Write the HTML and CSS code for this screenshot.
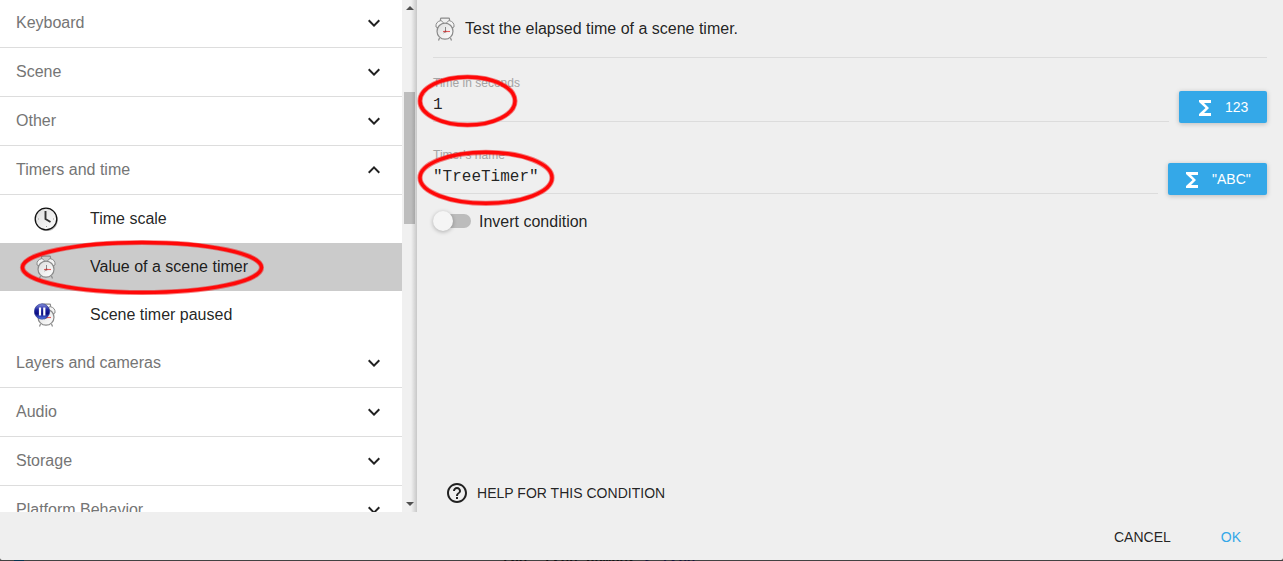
FILE: index.html
```
<!DOCTYPE html>
<html lang="en">
<head>
<meta charset="utf-8">
<title>Condition editor</title>
<link rel="stylesheet" href="styles.css">
</head>
<body>
<svg class="defs" width="0" height="0">
  <defs>
    <linearGradient id="face" x1="0" y1="0" x2="1" y2="1"><stop offset="0" stop-color="#dcdcdc"/><stop offset="1" stop-color="#fff"/></linearGradient>
    <linearGradient id="blue" x1="0" y1="0" x2="0" y2="1"><stop offset="0" stop-color="#8c96e0"/><stop offset=".4" stop-color="#1a209c"/><stop offset=".65" stop-color="#0b0b80"/><stop offset="1" stop-color="#5a80f0"/></linearGradient>
    <symbol id="down" viewBox="0 0 24 24"><path d="M7.41 8.59 12 13.17l4.59-4.58L18 10l-6 6-6-6z"/></symbol>
    <symbol id="up" viewBox="0 0 24 24"><path d="M7.41 15.41 12 10.83l4.59 4.58L18 14l-6-6-6 6z"/></symbol>
    <symbol id="sigma" viewBox="0 0 24 24"><path d="M18 4H6v2l6.500 6L6 18v2h12v-3h-7l5-5-5-5h7z"/></symbol>
    <symbol id="alarm" viewBox="0 0 24 24">
      <path d="M7.500 3.800V2q0-.8 1-.8h7q1 0 1 .8v1.800M6.500 21l-1 2.500M17.500 21l1 2.500" fill="none" stroke="#8a8a8a" stroke-width="1.200"/>
      <path d="M3 10Q2.300 4.800 8 3.500l2.500 2.300-5.500 5zM21 10Q21.700 4.800 16 3.500l-2.500 2.300 5.500 5z" fill="#f4f4f4" stroke="#8a8a8a"/>
      <circle cx="12" cy="14.200" r="8" fill="url(#face)" stroke="#8a8a8a" stroke-width="1.200"/>
      <path d="M12.500 10v4.500l-2 1.500" stroke="#888" fill="none"/>
      <path d="M10 14.500h7" stroke="#e65c5c" stroke-width="1.100" fill="none"/><circle cx="12.500" cy="14.500" r="1" fill="#a84040"/>
    </symbol>
  </defs>
</svg>
<div class="dialog">
  <div class="main">
    <div class="list">
      <div class="group"><span>Keyboard</span><svg class="chev"><use href="#down"/></svg></div>
      <div class="group"><span>Scene</span><svg class="chev"><use href="#down"/></svg></div>
      <div class="group"><span>Other</span><svg class="chev"><use href="#down"/></svg></div>
      <div class="group"><span>Timers and time</span><svg class="chev"><use href="#up"/></svg></div>
      <div class="item">
        <svg class="pic" viewBox="0 0 24 24"><circle cx="12.800" cy="13.200" r="11" fill="#bbb"/><circle cx="12" cy="12" r="10.800" fill="url(#face)" stroke="#111" stroke-width="1.300"/><path d="M11.500 4v8l5 3" fill="none" stroke="#333" stroke-width="1.900"/><path d="M4 12h1M19 12h1M12 19.500h1" stroke="#999"/></svg>
        <span>Time scale</span>
      </div>
      <div class="item selected"><svg class="pic"><use href="#alarm"/></svg><span>Value of a scene timer</span></div>
      <div class="item">
        <svg class="pic" viewBox="0 0 24 24"><use href="#alarm" width="24" height="24"/><circle cx="8" cy="8.500" r="7.700" fill="url(#blue)" stroke="#22308c" stroke-width=".6"/><path d="M6 4.500v8M10.300 4.500v8" stroke="#fff" stroke-width="2.200"/></svg>
        <span>Scene timer paused</span>
      </div>
      <div class="group"><span>Layers and cameras</span><svg class="chev"><use href="#down"/></svg></div>
      <div class="group"><span>Audio</span><svg class="chev"><use href="#down"/></svg></div>
      <div class="group"><span>Storage</span><svg class="chev"><use href="#down"/></svg></div>
      <div class="group"><span>Platform Behavior</span><svg class="chev"><use href="#down"/></svg></div>
    </div>
    <div class="scrollbar">
      <svg class="arrow" viewBox="0 0 8 4"><path d="M0 4 4 0l4 4z"/></svg>
      <div class="thumb"></div>
      <svg class="arrow" viewBox="0 0 8 4"><path d="M0 0h8L4 4z"/></svg>
    </div>
    <div class="detail">
      <div class="heading"><svg class="pic"><use href="#alarm"/></svg><span>Test the elapsed time of a scene timer.</span></div>
      <div class="row first">
        <div class="field"><label>Time in seconds</label><div class="value">1</div></div>
        <button class="expr num"><svg><use href="#sigma"/></svg><span>123</span></button>
      </div>
      <div class="row">
        <div class="field"><label>Timer's name</label><div class="value">"TreeTimer"</div></div>
        <button class="expr str"><svg><use href="#sigma"/></svg><span>"ABC"</span></button>
      </div>
      <div class="toggle"><div class="switch"><div class="knob"></div></div><span>Invert condition</span></div>
      <div class="help"><svg viewBox="0 0 24 24"><path d="M11 18h2v-2h-2v2zm1-16C6.480 2 2 6.480 2 12s4.480 10 10 10 10-4.480 10-10S17.520 2 12 2zm0 18c-4.410 0-8-3.590-8-8s3.590-8 8-8 8 3.590 8 8-3.590 8-8 8zm0-14c-2.210 0-4 1.790-4 4h2c0-1.100.9-2 2-2s2 .9 2 2c0 2-3 1.750-3 5h2c0-2.250 3-2.500 3-5 0-2.210-1.790-4-4-4z"/></svg><span>HELP FOR THIS CONDITION</span></div>
    </div>
  </div>
  <div class="actions"><span class="cancel">CANCEL</span><span class="ok">OK</span></div>
</div>
<div class="behind"><span class="chip"></span><span class="under">the &nbsp;tree_number <b>&lt; tree</b></span></div>
<svg class="marks" viewBox="0 0 1283 561">
  <g class="halo"><ellipse cx="142" cy="267.500" rx="119.500" ry="25"/><ellipse cx="467.500" cy="101" rx="47.500" ry="24"/><ellipse cx="486" cy="177.800" rx="66" ry="25.500"/></g>
  <g class="ring"><ellipse cx="142" cy="267.500" rx="119.500" ry="25"/><ellipse cx="467.500" cy="101" rx="47.500" ry="24"/><ellipse cx="486" cy="177.800" rx="66" ry="25.500"/></g>
</svg>
</body>
</html>
```
FILE: styles.css
```
* { box-sizing: border-box; }
body { margin: 0; width: 1283px; height: 561px; overflow: hidden; background: #424242; font: 16px/24px "Liberation Sans", Arial, sans-serif; color: rgba(0,0,0,.87); }
.defs { position: absolute; }
svg { display: block; flex: none; }
.dialog { height: 560px; background: #efefef; border-radius: 0 0 2px 2px; overflow: hidden; }
.main { display: flex; height: 512px; overflow: hidden; }
.list { width: 402px; height: 512px; overflow: hidden; background: #fff; flex: none; }
.group { display: flex; align-items: center; justify-content: space-between; height: 49px; padding: 0 16px; border-bottom: 1px solid #ddd; color: #757575; }
.group:first-child { margin-top: -1px; }
.chev { width: 24px; height: 24px; fill: #212121; }
.item { display: flex; align-items: center; gap: 32px; height: 48px; padding-left: 34px; }
.item .pic { margin-top: -1px; }
.item.selected .pic { margin-top: 0; }
.selected { background: #cbcbcb; }
.pic { width: 24px; height: 24px; }
.scrollbar { width: 15px; height: 512px; display: flex; flex-direction: column; align-items: center; justify-content: space-between; padding: 6px 0; background: linear-gradient(to right, rgba(0,0,0,0) 60%, rgba(0,0,0,.17)), #f0f0f0; flex: none; }
.arrow { width: 8px; height: 4px; fill: #505050; }
.thumb { width: 11px; height: 132px; background: rgba(0,0,0,.21); margin-bottom: 196px; }
.detail { flex: 1; padding: 0 16px; display: flex; flex-direction: column; }
.heading { display: flex; align-items: center; gap: 8px; height: 58px; border-bottom: 1px solid #dcdcdc; }
.row { display: flex; align-items: flex-end; gap: 10px; height: 72px; }
.row.first { height: 64px; }
.field { flex: 1; height: 48px; border-bottom: 1px solid #dcdcdc; padding-top: 2px; }
.field label { display: block; font-size: 12px; line-height: 14px; color: #a4a4a4; }
.value { font: 16px/20px "Liberation Mono", monospace; margin-top: 5px; }
.expr { display: flex; align-items: center; height: 32px; margin: 0 0 -1px; padding: 0; border: 0; border-radius: 2px; background: #34a8e8; color: #fff; font: 14px "Liberation Sans", Arial, sans-serif; box-shadow: 0 1px 5px rgba(0,0,0,.22); }
.expr svg { width: 24px; height: 24px; margin: 1px 8px 0 14px; fill: #fff; }
.num { width: 88px; }
.str { width: 99px; }
.str svg { margin-left: 12px; }
.toggle { display: flex; align-items: center; height: 24px; margin-top: 16px; gap: 8px; }
.switch { width: 34px; height: 14px; margin: -2px 0 0 4px; border-radius: 7px; background: #bcbcbc; }
.knob { width: 20px; height: 20px; margin: -3px 0 0 -4px; border-radius: 50%; background: #f5f5f5; box-shadow: 0 1px 4px rgba(0,0,0,.28); }
.help { display: flex; align-items: center; gap: 8px; font-size: 14px; letter-spacing: .02px; margin: auto 0 7px 12px; }
.help svg { width: 24px; height: 24px; fill: #212121; }
.actions { display: flex; justify-content: flex-end; padding: 13px 42px 0 0; gap: 50px; font-size: 14px; }
.ok { color: #34a8e8; }
.behind { display: flex; height: 1px; overflow: hidden; }
.chip { width: 10px; margin-left: 14px; background: #063451; }
.under { margin-left: 478px; font: bold 14px/4px "Liberation Mono", monospace; color: #111; }
.under b { color: #14143c; }
.marks { position: absolute; left: 0; top: 0; width: 1283px; height: 561px; fill: none; stroke: #f01010; }
.halo { stroke-width: 5.2; opacity: .5; }
.ring { stroke: #ff0808; stroke-width: 3.4; }
```
